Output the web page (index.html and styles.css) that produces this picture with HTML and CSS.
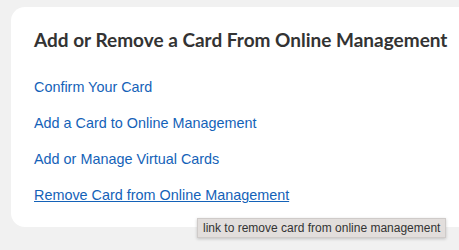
FILE: index.html
```html
<!DOCTYPE html>
<html lang="en">
<head>
    <meta charset="UTF-8">
    <title>Manage Cards</title>
    <link rel="stylesheet" href="styles.css">
</head>
<body>
    <div class="card">
        <h2>Add or Remove a Card From Online Management</h2>
        <ul class="links">
            <li><a href="#">Confirm Your Card</a></li>
            <li><a href="#">Add a Card to Online Management</a></li>
            <li><a href="#">Add or Manage Virtual Cards</a></li>
            <li class="tip-wrap">
                <a href="#" class="hovered">Remove Card from Online Management</a>
                <span class="tooltip">link to remove card from online management</span>
            </li>
        </ul>
    </div>
</body>
</html>
```

FILE: styles.css
```css
html {
    overflow: hidden;
}
body {
    font-family: "Liberation Sans", Arial, sans-serif;
    background-color: #f1f1f1;
    margin: 0;
    padding: 7px 0 0 11px;
    min-height: 100vh;
    box-sizing: border-box;
}
.card {
    background-color: #fff;
    border-radius: 14px 0 0 14px;
    padding: 21px 0 0 23px;
    width: 470px;
    height: 220px;
    box-sizing: border-box;
}
.card h2 {
    margin: 0;
    font-family: Lato, "Liberation Sans", sans-serif;
    font-size: 19px;
    line-height: 23px;
    font-weight: 700;
    color: #333;
    white-space: nowrap;
}
.links {
    list-style: none;
    margin: 27px 0 0;
    padding: 0;
    display: flex;
    flex-direction: column;
    gap: 18px;
}
.links li {
    font-size: 14.4px;
    line-height: 18px;
}
.links a {
    color: #1462b8;
    text-decoration: none;
}
.links a.hovered {
    text-decoration: underline;
}
.tip-wrap {
    position: relative;
}
.tooltip {
    position: absolute;
    left: 163px;
    top: 32px;
    background-color: #e2dedc;
    border: 1px solid #cfcbc9;
    color: #333;
    font-size: 12px;
    line-height: 16px;
    padding: 1px 5px;
    white-space: nowrap;
    box-shadow: 0 1px 3px rgba(0, 0, 0, 0.2);
}
```
